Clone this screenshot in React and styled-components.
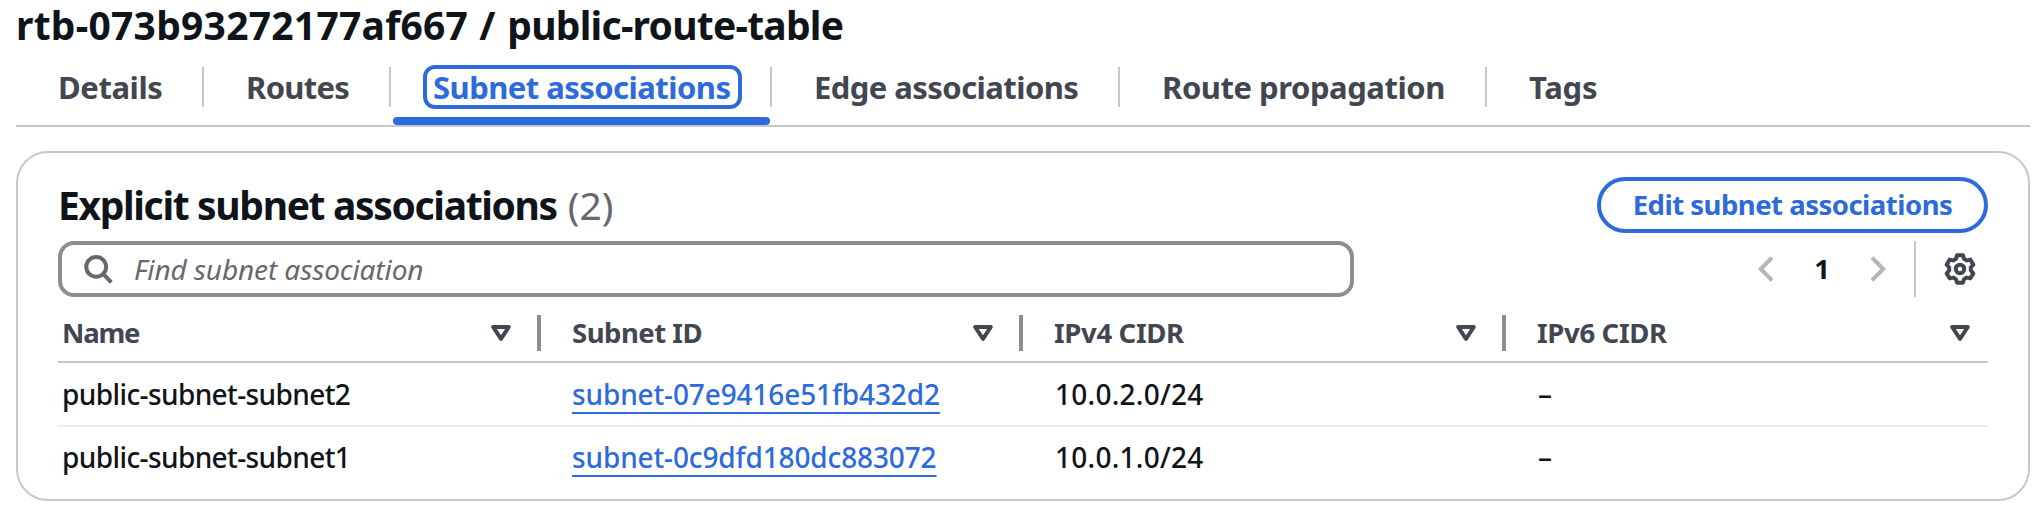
import React from "react";
import styled, { createGlobalStyle } from "styled-components";

const color = {
  text: "#0f141a",
  heading: "#424650",
  muted: "#656871",
  accent: "#2d6adb",
  line: "#c6c6cd",
  rowLine: "#ebebf0",
  control: "#8c8c94",
  disabled: "#b4b4bb",
};

const GlobalStyle = createGlobalStyle`
  * { box-sizing: border-box; }
  body {
    margin: 0;
    background: #fff;
    color: ${color.text};
    font-family: "Noto Sans", "Open Sans", sans-serif;
    white-space: nowrap;
  }
`;

const Page = styled.main`
  display: flex;
  flex-direction: column;
  padding: 0 2px 0 16px;
`;

const Title = styled.h1`
  margin: 0;
  height: 50px;
  line-height: 50px;
  font-size: 39px;
  font-weight: 700;
  white-space: pre;
`;

const Tracked = styled.span`
  letter-spacing: ${(p) => p.$spacing}px;
`;

const TabList = styled.nav`
  display: flex;
  height: 77px;
  padding-top: 17px;
  border-bottom: 2px solid ${color.line};
`;

const Tab = styled.div`
  display: flex;
  flex-direction: column;
  gap: 10px;
  width: ${(p) => p.$width}px;
`;

const TabHead = styled.div`
  display: flex;
  align-items: center;
  height: 40px;
  padding-left: ${(p) => (p.$active ? 36 : 42)}px;
  border-right: ${(p) => (p.$last ? "0" : `2px solid ${color.line}`)};
`;

const TabLabel = styled.a`
  height: 36px;
  line-height: 36px;
  font-size: 31px;
  font-weight: 680;
  letter-spacing: ${(p) => p.$spacing}px;
  color: ${(p) => (p.$active ? color.accent : color.heading)};
  ${(p) =>
    p.$active &&
    `
    width: 311px;
    padding-left: 6px;
    outline: 4px solid ${color.accent};
    border-radius: 8px;
  `}
`;

const TabMarker = styled.div`
  height: 8px;
  margin: 0 2px;
  border-radius: 4px;
  background: ${color.accent};
`;

const Panel = styled.section`
  height: 350px;
  margin-top: 24px;
  padding: 24px 40px 0;
  border: 2px solid ${color.line};
  border-radius: 32px;
`;

const PanelHeader = styled.header`
  display: flex;
  align-items: center;
  justify-content: space-between;
  height: 56px;
`;

const PanelTitle = styled.h2`
  display: flex;
  gap: 11px;
  margin: 0;
  line-height: 56px;
  font-size: 39px;
  font-weight: 690;
  letter-spacing: -1.34px;
`;

const Counter = styled.span`
  font-weight: 440;
  letter-spacing: 0;
  color: ${color.muted};
`;

const Button = styled.button`
  width: 391px;
  height: 56px;
  padding: 0;
  border: 4px solid ${color.accent};
  border-radius: 28px;
  background: #fff;
  color: ${color.accent};
  font: 690 27.5px/48px "Noto Sans", sans-serif;
  letter-spacing: -0.5px;
`;

const Toolbar = styled.div`
  display: flex;
  align-items: center;
  justify-content: space-between;
  margin-top: 8px;
  padding-right: 12px;
`;

const SearchField = styled.div`
  display: flex;
  align-items: center;
  gap: 20px;
  width: 1296px;
  height: 56px;
  padding-left: 20px;
  border: 4px solid ${color.control};
  border-radius: 16px;
  color: ${color.muted};
  font-size: 28px;
  font-style: italic;
  font-weight: 430;
  letter-spacing: -0.1px;
`;

const Controls = styled.div`
  display: flex;
  align-items: center;
`;

const PageNumber = styled.span`
  width: 80px;
  text-align: center;
  line-height: 54px;
  font-size: 27.5px;
  font-weight: 700;
`;

const Separator = styled.div`
  width: 2px;
  height: 56px;
  margin: 0 28px 0 20px;
  background: ${color.line};
`;

const Icon = styled.svg`
  display: block;
  width: 32px;
  height: 32px;
  fill: none;
  stroke: ${(p) => p.$color};
  stroke-width: 4;
`;

const SortIcon = styled.svg`
  width: 20px;
  height: 16px;
  fill: none;
  stroke: ${color.heading};
  stroke-width: 4;
  stroke-linejoin: round;
`;

const TableRow = styled.div`
  display: grid;
  grid-template-columns: 483px 482px 483px 482px;
  align-items: center;
`;

const HeadRow = styled(TableRow)`
  height: 66px;
  padding: 8px 0 0;
  border-bottom: 2px solid ${color.line};
`;

const HeadCell = styled.div`
  display: flex;
  align-items: center;
  justify-content: space-between;
  height: 36px;
  padding: 0 ${(p) => (p.$last ? 18 : 26)}px 0 ${(p) => (p.$first ? 4 : 31)}px;
  border-right: ${(p) => (p.$last ? "0" : `4px solid ${color.control}`)};
  color: ${color.heading};
  font-size: 27.5px;
  font-weight: 660;
  line-height: 36px;
  letter-spacing: ${(p) => p.$spacing}px;
`;

const BodyRow = styled(TableRow)`
  height: ${(p) => (p.$last ? 59 : 64)}px;
  border-bottom: ${(p) => (p.$last ? "0" : `2px solid ${color.rowLine}`)};
`;

const Cell = styled.div`
  padding-left: ${(p) => (p.$first ? 4 : p.$link ? 31 : 32)}px;
  font-size: 28px;
  font-weight: 480;
  line-height: 40px;
  letter-spacing: ${(p) => p.$spacing || 0}px;
`;

const Link = styled.a`
  color: ${color.accent};
  text-decoration: underline;
  text-decoration-thickness: 2px;
  text-decoration-skip-ink: none;
  text-underline-offset: 7px;
`;

const tabs = [
  { label: "Details", width: 188, spacing: -0.4 },
  { label: "Routes", width: 187, spacing: -0.7 },
  { label: "Subnet associations", width: 381, spacing: -0.54, active: true },
  { label: "Edge associations", width: 348, spacing: -0.56 },
  { label: "Route propagation", width: 367, spacing: -0.46 },
  { label: "Tags", width: 120, spacing: -0.2 },
];

const columns = [
  { label: "Name", spacing: -1.2 },
  { label: "Subnet ID", spacing: -0.5 },
  { label: "IPv4 CIDR", spacing: -0.35 },
  { label: "IPv6 CIDR", spacing: -0.35 },
];

const subnets = [
  { name: "public-subnet-subnet2", id: "subnet-07e9416e51fb432d2", ipv4: "10.0.2.0/24", ipv6: "–" },
  { name: "public-subnet-subnet1", id: "subnet-0c9dfd180dc883072", ipv4: "10.0.1.0/24", ipv6: "–" },
];

const gearPath = (() => {
  const points = [];
  for (let tooth = 0; tooth < 6; tooth += 1) {
    [[-22, 10.9], [-12, 14], [12, 14], [22, 10.9]].forEach(([offset, radius]) => {
      const angle = ((tooth * 60 + offset - 90) * Math.PI) / 180;
      points.push(`${(16 + radius * Math.cos(angle)).toFixed(2)} ${(16 + radius * Math.sin(angle)).toFixed(2)}`);
    });
  }
  return `M${points.join("L")}Z`;
})();

export default function App() {
  return (
    <Page>
      <GlobalStyle />
      <Title>
        <Tracked $spacing={0.25}>rtb-073b93272177af667</Tracked>
        <Tracked $spacing={0.9}> / </Tracked>
        <Tracked $spacing={-0.75}>public-route-table</Tracked>
      </Title>

      <TabList>
        {tabs.map((tab, i) => (
          <Tab key={tab.label} $width={tab.width}>
            <TabHead $active={tab.active} $last={i === tabs.length - 1}>
              <TabLabel $active={tab.active} $spacing={tab.spacing}>{tab.label}</TabLabel>
            </TabHead>
            {tab.active && <TabMarker />}
          </Tab>
        ))}
      </TabList>

      <Panel>
        <PanelHeader>
          <PanelTitle>
            Explicit subnet associations
            <Counter>(2)</Counter>
          </PanelTitle>
          <Button>Edit subnet associations</Button>
        </PanelHeader>

        <Toolbar>
          <SearchField>
            <Icon viewBox="0 0 32 32" $color={color.muted}>
              <circle cx="14.2" cy="13.9" r="9.9" />
              <path d="M21 20.7 29.3 29.3" />
            </Icon>
            Find subnet association
          </SearchField>
          <Controls>
            <Icon viewBox="0 0 32 32" $color={color.disabled}>
              <path d="M22 4.7 10.8 16 22 27.3" />
            </Icon>
            <PageNumber>1</PageNumber>
            <Icon viewBox="0 0 32 32" $color={color.disabled}>
              <path d="M10 4.7 21.2 16 10 27.3" />
            </Icon>
            <Separator />
            <Icon viewBox="0 0 32 32" $color={color.heading} strokeLinejoin="round">
              <path d={gearPath} />
              <circle cx="16" cy="16" r="4.2" />
            </Icon>
          </Controls>
        </Toolbar>

        <HeadRow>
          {columns.map((column, i) => (
            <HeadCell key={column.label} $first={i === 0} $last={i === columns.length - 1} $spacing={column.spacing}>
              {column.label}
              <SortIcon viewBox="0 0 20 16">
                <path d="M2.2 2h15.6L10 13.8z" />
              </SortIcon>
            </HeadCell>
          ))}
        </HeadRow>
        {subnets.map((subnet, i) => (
          <BodyRow key={subnet.id} $last={i === subnets.length - 1}>
            <Cell $first $spacing={-0.6}>{subnet.name}</Cell>
            <Cell $link $spacing={-0.13}><Link>{subnet.id}</Link></Cell>
            <Cell $spacing={0.25}>{subnet.ipv4}</Cell>
            <Cell>{subnet.ipv6}</Cell>
          </BodyRow>
        ))}
      </Panel>
    </Page>
  );
}
